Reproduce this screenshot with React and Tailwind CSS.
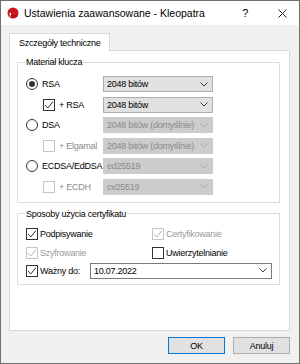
import React from 'react';

const Chevron = ({ disabled }) => (
  <svg width="8" height="5" viewBox="0 0 8 5" className="shrink-0">
    <polyline points="0.5,0.5 4,4 7.5,0.5" fill="none" stroke={disabled ? '#a8a8a8' : '#3c3c3c'} strokeWidth="1" />
  </svg>
);

const Select = ({ value, disabled, white }) => (
  <div
    className={`flex h-[16px] items-center justify-between pl-[3px] pr-[4px] border ${
      white
        ? 'w-[182px] bg-white border-[#7a7a7a] text-black'
        : disabled
        ? 'w-[110px] bg-[#cccccc] border-[#cccccc] text-[#8a8a8a]'
        : 'w-[110px] bg-[#e1e1e1] border-[#adadad] text-black'
    }`}
  >
    <span className="whitespace-nowrap">{value}</span>
    <Chevron disabled={disabled} />
  </div>
);

const Radio = ({ checked }) => (
  <span className="flex h-[12px] w-[12px] shrink-0 items-center justify-center rounded-full border border-[#333] bg-white">
    {checked && <span className="h-[6px] w-[6px] rounded-full bg-[#333]" />}
  </span>
);

const Check = ({ checked, disabled }) => (
  <span
    className={`flex h-[12px] w-[12px] shrink-0 items-center justify-center border bg-white ${
      disabled ? 'border-[#c4c4c4]' : 'border-[#333]'
    }`}
  >
    {checked && (
      <svg width="10" height="10" viewBox="0 0 10 10">
        <polyline points="1,5 3.8,8 9,1.5" fill="none" stroke={disabled ? '#b4b4b4' : '#333'} strokeWidth="1" />
      </svg>
    )}
  </span>
);

const KeyRow = ({ control, label, indent, value, muted, disabled }) => (
  <div className="flex h-[16px] items-center">
    <div className={`flex w-[77px] items-center gap-[4px] ${indent ? 'pl-[17px]' : ''}`}>
      {control}
      <span className={`whitespace-nowrap ${muted ? 'text-[#8a8a8a]' : 'text-black'}`}>{label}</span>
    </div>
    <Select value={value} disabled={disabled} />
  </div>
);

const Option = ({ label, checked, disabled }) => (
  <div className="flex h-[14px] items-center gap-[2px]">
    <Check checked={checked} disabled={disabled} />
    <span className={disabled ? 'text-[#9a9a9a]' : 'text-black'}>{label}</span>
  </div>
);

export default function App() {
  return (
    <div
      className="flex h-[364px] w-[300px] flex-col border border-[#707070] bg-[#f0f0f0] text-[9px] leading-[12px] tracking-[-0.25px] text-black"
      style={{ fontFamily: '"Liberation Sans", Arial, sans-serif' }}
    >
      {/* Title bar */}
      <div className="flex h-[24px] items-center bg-white pl-[6px] pr-[12px]">
        <svg width="12" height="12" viewBox="0 0 12 12" className="mr-[5px]">
          <circle cx="6" cy="6" r="5.5" fill="#c8161d" />
          <path d="M2.5 10 L2.5 7 Q2.5 5.5 4 5.8 L4 10 Z" fill="#fff" />
          <path d="M1.5 9 H10.5" stroke="#8e0d12" strokeWidth="1" />
        </svg>
        <span className="text-[10.5px] tracking-normal">Ustawienia zaawansowane - Kleopatra</span>
        <span className="ml-auto mr-[30px] text-[11px]">?</span>
        <svg width="9" height="9" viewBox="0 0 9 9">
          <path d="M0.5 0.5 L8.5 8.5 M8.5 0.5 L0.5 8.5" stroke="#222" strokeWidth="1" />
        </svg>
      </div>

      {/* Body */}
      <div className="flex flex-col pl-[8px] pt-[8px]">
        <div className="relative z-10 -mb-px flex h-[18px] w-[101px] items-center border border-b-0 border-[#d9d9d9] bg-white pl-[9px]">
          Szczegóły techniczne
        </div>
        <div className="flex h-[281px] w-[281px] flex-col border border-[#d9d9d9] bg-white pl-[7px] pt-[5px]">
          <fieldset className="w-[263px] border border-[#dcdcdc] pb-[7px] pl-[8px]">
            <legend className="ml-[-1px] px-px">Materiał klucza</legend>
            <div className="flex flex-col gap-[4.5px] pt-[8px]">
              <KeyRow control={<Radio checked />} label="RSA" value="2048 bitów" />
              <KeyRow control={<Check checked />} label="+ RSA" indent value="2048 bitów" />
              <KeyRow control={<Radio />} label="DSA" value="2048 bitów (domyślnie)" disabled />
              <KeyRow control={<Check disabled />} label="+ Elgamal" indent value="2048 bitów (domyślnie)" muted disabled />
              <KeyRow control={<Radio />} label="ECDSA/EdDSA" value="ed25519" disabled />
              <KeyRow control={<Check disabled />} label="+ ECDH" indent value="cv25519" muted disabled />
            </div>
          </fieldset>

          <fieldset className="mt-[5px] w-[263px] border border-[#dcdcdc] pb-[5px] pl-[8px]">
            <legend className="ml-[-1px] px-px">Sposoby użycia certyfikatu</legend>
            <div className="grid grid-cols-[126px_1fr] gap-y-[5px] pt-[7px]">
              <Option label="Podpisywanie" checked />
              <Option label="Certyfikowanie" checked disabled />
              <Option label="Szyfrowanie" checked disabled />
              <Option label="Uwierzytelnianie" />
            </div>
            <div className="mt-[3px] flex h-[16px] items-center">
              <div className="flex w-[64px] items-center gap-[2px]">
                <Check checked />
                <span>Ważny do:</span>
              </div>
              <Select value="10.07.2022" white />
            </div>
          </fieldset>
        </div>

        <div className="mt-[6px] flex w-[281px] justify-end gap-[8px]">
          <button className="h-[17px] w-[57px] border border-[#0078d7] bg-[#e1e1e1]">OK</button>
          <button className="h-[17px] w-[57px] border border-[#adadad] bg-[#e1e1e1]">Anuluj</button>
        </div>
      </div>
    </div>
  );
}
